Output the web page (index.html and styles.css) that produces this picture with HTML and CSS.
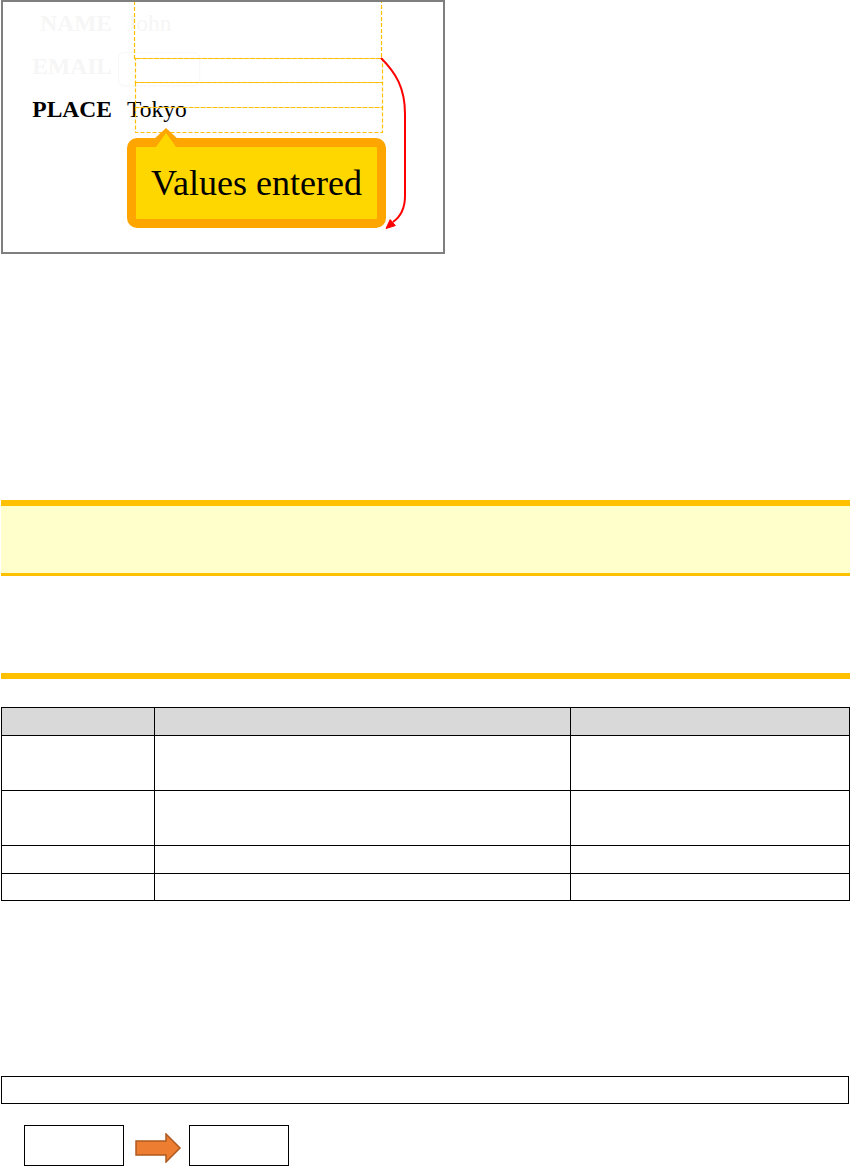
FILE: index.html
```html
<!DOCTYPE html>
<html lang="en">
<head>
    <meta charset="UTF-8">
    <meta name="viewport" content="width=device-width, initial-scale=1.0">
    <title>Entered values</title>
    <link rel="stylesheet" href="styles.css">
</head>
<body>
    <div class="page">
        <div class="shot">
            <div class="entry-form">
                <span class="label ghost">NAME</span>
                <span class="value ghost">John</span>
                <span class="label ghost">EMAIL</span>
                <span class="value"><span class="ghost-input"></span></span>
                <span class="label">PLACE</span>
                <span class="value">Tokyo</span>
            </div>

            <svg class="overlay" width="444" height="254" viewBox="0 0 444 254">
                <g fill="none" stroke="#ffbf00" stroke-width="1.2" stroke-dasharray="4 2">
                    <rect x="134.5" y="-6" width="247" height="64.5"/>
                    <rect x="135.5" y="58.5" width="247" height="24"/>
                    <rect x="135.5" y="82.5" width="247" height="25"/>
                    <rect x="135.5" y="107.5" width="247" height="25"/>
                </g>
                <path d="M381 58 C396 73 405 88 405 114 L405 196 C405 208 400 217 393 222"
                      fill="none" stroke="#ff0000" stroke-width="2"/>
                <polygon points="386,228.5 390.2,219.6 395.4,225.6" fill="#ff0000" stroke="#ff0000" stroke-width="1"/>
            </svg>

            <div class="bubble">Values entered</div>
        </div>

        <div class="note-band"></div>

        <div class="rule"></div>

        <table class="sheet">
            <colgroup>
                <col class="col-a">
                <col class="col-b">
                <col class="col-c">
            </colgroup>
            <tr class="head"><th></th><th></th><th></th></tr>
            <tr class="tall"><td></td><td></td><td></td></tr>
            <tr class="tall"><td></td><td></td><td></td></tr>
            <tr class="short"><td></td><td></td><td></td></tr>
            <tr class="short last"><td></td><td></td><td></td></tr>
        </table>

        <div class="empty-box"></div>

        <div class="flow">
            <div class="step"></div>
            <svg class="step-arrow" width="47" height="30" viewBox="0 0 47 30">
                <polygon points="1,8 31,8 31,1 45,15 31,29 31,22 1,22"
                         fill="#ed7d31" stroke="#ae5a21" stroke-width="1.5"/>
            </svg>
            <div class="step"></div>
        </div>
    </div>
</body>
</html>
```

FILE: styles.css
```css
* {
    box-sizing: border-box;
}

body {
    margin: 0;
    background: #ffffff;
    font-family: 'Liberation Serif', 'Times New Roman', serif;
    color: #000000;
}

.page {
    width: 850px;
    padding-left: 1px;
}

/* Screenshot frame */
.shot {
    position: relative;
    width: 444px;
    height: 254px;
    border: 2px solid #7f7f7f;
    overflow: hidden;
}

.entry-form {
    display: grid;
    grid-template-columns: 109px 1fr;
    column-gap: 15px;
    font-size: 23.5px;
    line-height: 43px;
}

.label {
    font-weight: bold;
    text-align: right;
}

.ghost {
    color: #f6f6f6;
}

.ghost-input {
    display: inline-block;
    vertical-align: middle;
    width: 82px;
    height: 34px;
    margin-left: -9px;
    border: 1px solid #f8f8f8;
    border-radius: 6px;
    box-shadow: 0 2px 3px rgba(0, 0, 0, 0.015);
}

.overlay {
    position: absolute;
    left: -3px;
    top: -2px;
}

.bubble {
    position: absolute;
    left: 124px;
    top: 136px;
    width: 259px;
    height: 90px;
    border: 9px solid #ffa500;
    border-radius: 10px;
    background: #ffd700;
    font-size: 36px;
    line-height: 72px;
    text-align: center;
}

.bubble::before {
    content: "";
    position: absolute;
    left: 17px;
    top: -19px;
    border-left: 13px solid transparent;
    border-right: 13px solid transparent;
    border-bottom: 12px solid #ffa500;
}

.bubble::after {
    content: "";
    position: absolute;
    left: 20px;
    top: -14px;
    border-left: 10px solid transparent;
    border-right: 10px solid transparent;
    border-bottom: 14px solid #ffd700;
}

/* Yellow note band */
.note-band {
    width: 849px;
    height: 76px;
    margin-top: 246px;
    border-top: 6px solid #ffc000;
    border-bottom: 3px solid #ffc000;
    background: #ffffcc;
}

.rule {
    width: 849px;
    height: 6px;
    margin-top: 97px;
    background: #ffc000;
}

/* Empty table */
.sheet {
    width: 848px;
    margin-top: 28px;
    border-collapse: collapse;
    table-layout: fixed;
}

.sheet th,
.sheet td {
    border: 1px solid #000000;
    padding: 0;
}

.sheet .head th {
    background: #d9d9d9;
}

.col-a {
    width: 153px;
}

.col-b {
    width: 416px;
}

.col-c {
    width: 279px;
}

.sheet .head {
    height: 28px;
}

.sheet .tall {
    height: 55px;
}

.sheet .short {
    height: 28px;
}

.sheet .last {
    height: 27px;
}

.empty-box {
    width: 848px;
    height: 28px;
    margin-top: 175px;
    border: 1px solid #000000;
}

/* Step boxes */
.flow {
    display: flex;
    align-items: flex-start;
    margin-top: 21px;
    padding-left: 23px;
}

.step {
    width: 100px;
    height: 41px;
    border: 1px solid #000000;
}

.step-arrow {
    margin: 8px 7px 0 11px;
}
```
